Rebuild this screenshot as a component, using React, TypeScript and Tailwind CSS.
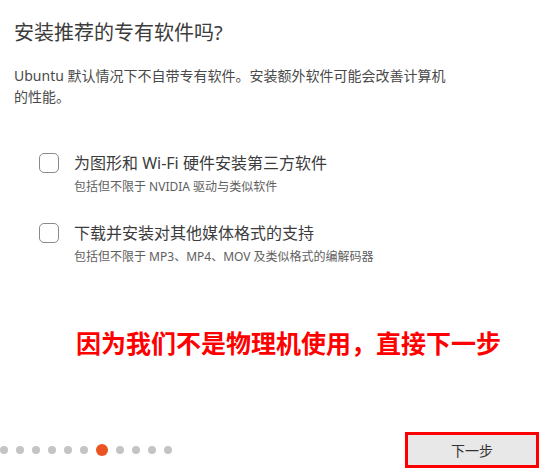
const dots = [0, 1, 2, 3, 4, 5, 6, 7, 8, 9, 10];

function Option({ label, hint }: { label: string; hint: string }) {
  return (
    <div className="flex items-start gap-[15px]">
      <div className="mt-[1px] h-[20px] w-[20px] shrink-0 rounded-[5px] border border-[#8a8a8a] bg-white" />
      <div>
        <div className="text-[16px] leading-[22px] text-[#3c3c3c]">{label}</div>
        <div className="mt-[5px] text-[12px] leading-[16px] text-[#5e5e5e]">{hint}</div>
      </div>
    </div>
  );
}

export default function App() {
  return (
    <div
      className="flex h-[476px] w-[541px] flex-col bg-white"
      style={{ fontFamily: '"Noto Sans", "Noto Sans CJK SC", sans-serif' }}
    >
      <h1 className="ml-[14px] mt-[20px] text-[20px] leading-[26px] text-[#3c3c3c]">安装推荐的专有软件吗?</h1>
      <p className="ml-[14px] mt-[19px] text-[14px] leading-[21px] text-[#4a4a4a]">
        Ubuntu 默认情况下不自带专有软件。安装额外软件可能会改善计算机
        <br />
        的性能。
      </p>

      <div className="ml-[39px] mt-[45px] flex flex-col gap-[27px]">
        <Option label="为图形和 Wi-Fi 硬件安装第三方软件" hint="包括但不限于 NVIDIA 驱动与类似软件" />
        <Option label="下载并安装对其他媒体格式的支持" hint="包括但不限于 MP3、MP4、MOV 及类似格式的编解码器" />
      </div>

      <div className="ml-[76px] mt-[62px] text-[25px] font-bold leading-[32px] text-[#ff0000]">
        因为我们不是物理机使用，直接下一步
      </div>

      <div className="mt-auto mb-[8px] flex items-center justify-between">
        <div className="flex items-center gap-[8px]">
          {dots.map((i) =>
            i === 6 ? (
              <div key={i} className="h-[12px] w-[12px] rounded-full bg-[#e95420]" />
            ) : (
              <div key={i} className="h-[8px] w-[8px] rounded-full bg-[#c4c4c4]" />
            )
          )}
        </div>
        <div className="mr-[2px] border-[3px] border-[#ff0000]">
          <button className="flex h-[30px] w-[128px] items-center justify-center bg-[#e8e8e8] text-[14px] text-[#333]">
            下一步
          </button>
        </div>
      </div>
    </div>
  );
}
